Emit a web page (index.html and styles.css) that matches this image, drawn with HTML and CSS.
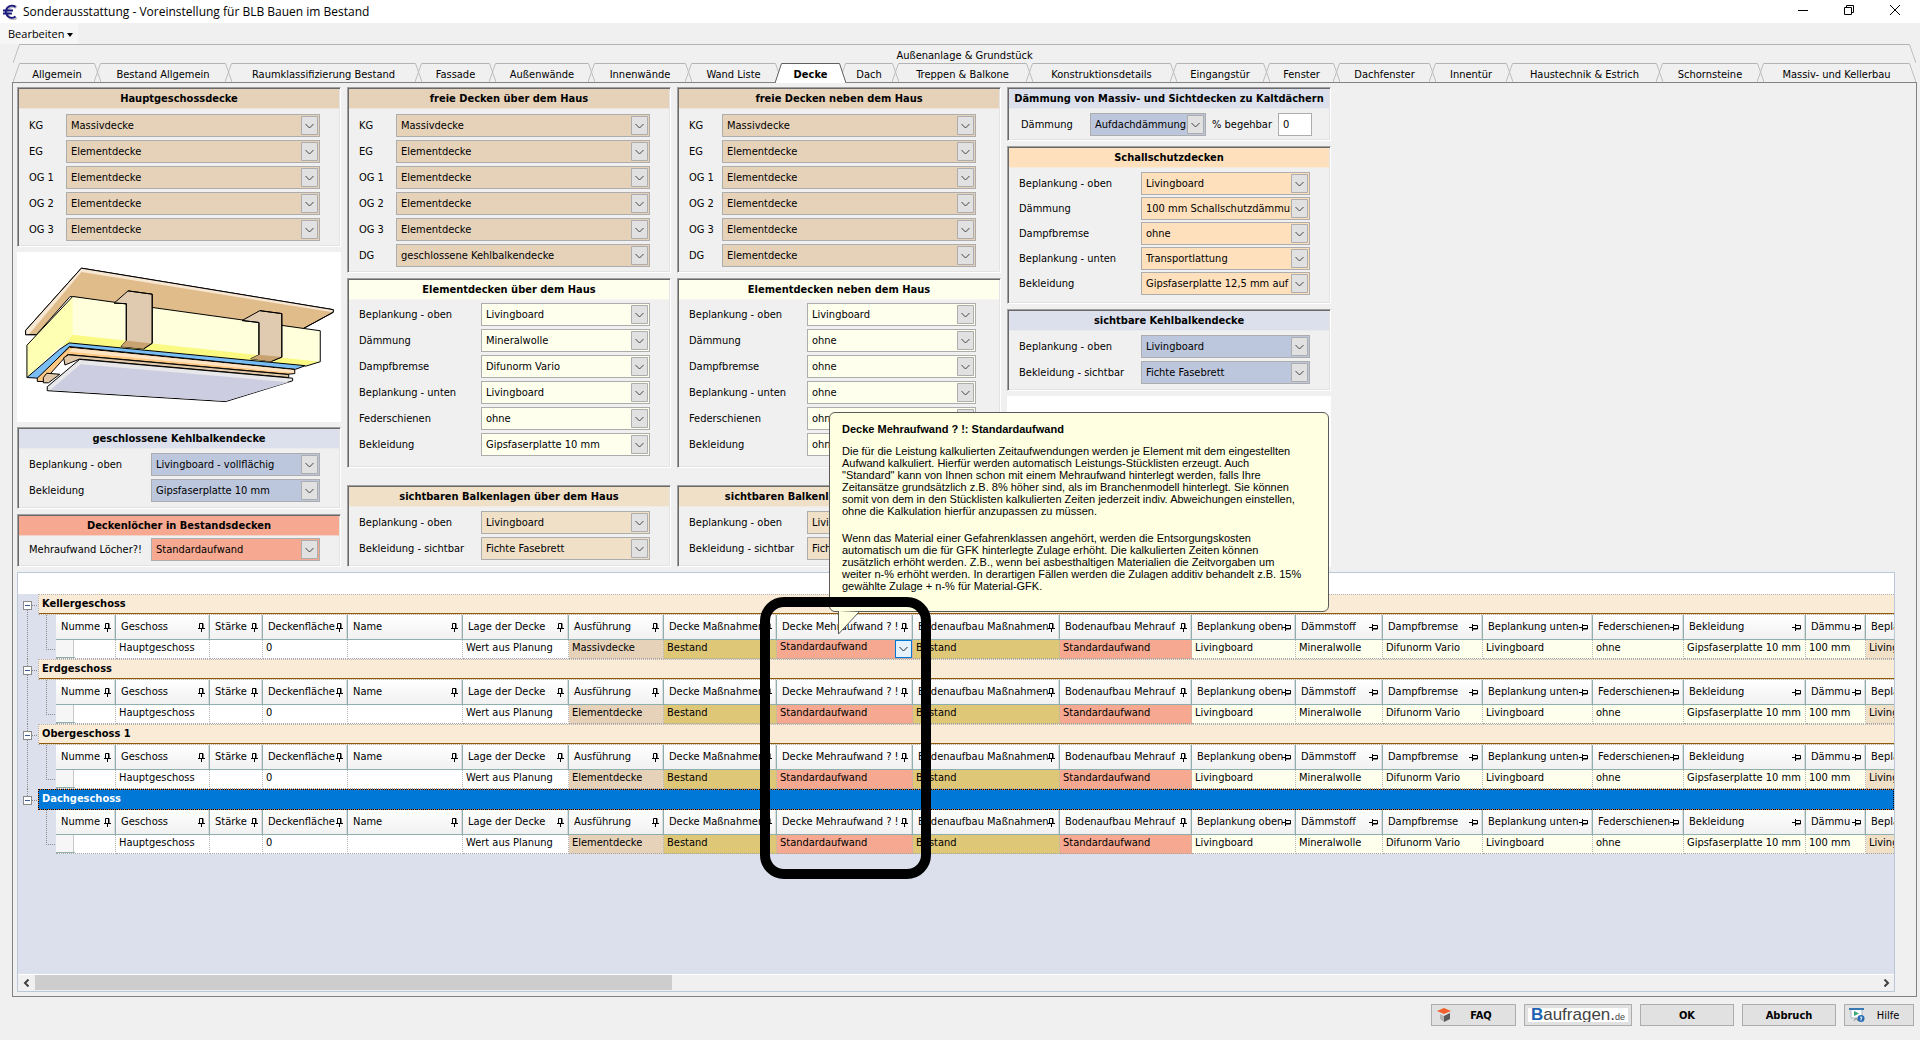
FILE: index.html
```html
<!DOCTYPE html>
<html lang="de">
<head>
<meta charset="utf-8">
<title>Sonderausstattung - Voreinstellung für BLB Bauen im Bestand</title>
<link rel="stylesheet" href="styles.css">
</head>
<body>
<header class="titlebar">
  <svg class="app-icon" viewBox="0 0 16 16" aria-hidden="true"><path d="M14.500 3.500A6 6 0 1 0 14.500 13.500" fill="none" stroke="#b9b9c4" stroke-width="3"/><path d="M13.500 3A6 6 0 1 0 13.500 12.500M1 6.500H11M1 9.500H10" fill="none" stroke="#1b1b7e" stroke-width="2"/></svg>
  <h1>Sonderausstattung - Voreinstellung für BLB Bauen im Bestand</h1>
  <button class="win" aria-label="Minimieren"><svg viewBox="0 0 12 12"><path d="M1 6.500H11"/></svg></button>
  <button class="win" aria-label="Wiederherstellen"><svg viewBox="0 0 12 12"><path d="M1.500 3.500H8.500V10.500H1.500ZM3.500 3.500V1.500H10.500V8.500H8.500"/></svg></button>
  <button class="win" aria-label="Schließen"><svg viewBox="0 0 12 12"><path d="M1 1L11 11M11 1L1 11"/></svg></button>
</header>
<nav class="menubar"><button>Bearbeiten <svg viewBox="0 0 6 4" aria-hidden="true"><path d="M0 0H6L3 4Z"/></svg></button></nav>

<div class="tabs" role="tablist">
  <div class="tab-row"><button class="tab" role="tab">Außenanlage &amp; Grundstück</button></div>
  <div class="tab-row">
    <button class="tab" role="tab" style="--w:81">Allgemein</button>
    <button class="tab" role="tab" style="--w:131">Bestand Allgemein</button>
    <button class="tab" role="tab" style="--w:190">Raumklassifizierung Bestand</button>
    <button class="tab" role="tab" style="--w:74">Fassade</button>
    <button class="tab" role="tab" style="--w:99">Außenwände</button>
    <button class="tab" role="tab" style="--w:97">Innenwände</button>
    <button class="tab" role="tab" style="--w:90">Wand Liste</button>
    <button class="tab active" role="tab" aria-selected="true" style="--w:64">Decke</button>
    <button class="tab" role="tab" style="--w:53">Dach</button>
    <button class="tab" role="tab" style="--w:134">Treppen &amp; Balkone</button>
    <button class="tab" role="tab" style="--w:144">Konstruktionsdetails</button>
    <button class="tab" role="tab" style="--w:93">Eingangstür</button>
    <button class="tab" role="tab" style="--w:70">Fenster</button>
    <button class="tab" role="tab" style="--w:96">Dachfenster</button>
    <button class="tab" role="tab" style="--w:77">Innentür</button>
    <button class="tab" role="tab" style="--w:150">Haustechnik &amp; Estrich</button>
    <button class="tab" role="tab" style="--w:101">Schornsteine</button>
    <button class="tab" role="tab" style="--w:159">Massiv- und Kellerbau</button>
  </div>
</div>

<main class="page">
<div class="columns">
  <div class="column">
    <section class="panel tan"><h2>Hauptgeschossdecke</h2><div class="rows short">
      <label for="h1">KG</label><select id="h1"><option>Massivdecke</option></select>
      <label for="h2">EG</label><select id="h2"><option>Elementdecke</option></select>
      <label for="h3">OG 1</label><select id="h3"><option>Elementdecke</option></select>
      <label for="h4">OG 2</label><select id="h4"><option>Elementdecke</option></select>
      <label for="h5">OG 3</label><select id="h5"><option>Elementdecke</option></select>
    </div></section>
    <svg class="drawing" viewBox="39 33 750 516" preserveAspectRatio="none" role="img" aria-label="Deckenaufbau">
      <path fill="#e0bc8a" d="M188 82L771 208V216L701 266L640 262L162 168L84 284H59V271Z"/>
      <path class="plain" fill="#f6e6d2" d="M188 82L771 208V216L188 94L66 284H59V271Z"/>
      <path fill="none" d="M188 82L771 208V216L701 266M59 271V284H84M59 271L188 82"/>
      <path class="plain" fill="#ffffdc" d="M168 168L741 272V366L168 284Z"/>
      <path class="plain" fill="#ffffb4" d="M168 168V284L62 414V316Z"/>
      <path class="plain" fill="#fafa82" d="M168 284L741 366L706 378L160 309L140 322Z"/>
      <path fill="none" d="M62 414V316L168 168L741 272V366L706 380"/>
      <path fill="#e0cbb0" d="M264 188L296 151L352 161V310L332 327L280 320L292 302V190Z"/>
      <path class="plain" fill="#c8a270" d="M292 302L350 311L332 327L280 320Z"/>
      <path fill="none" d="M264 188L292 190V302M296 151L352 161V310L332 327"/>
      <path fill="#e0cbb0" d="M560 241L601 211L652 220V352L628 365L580 357L599 345V247Z"/>
      <path class="plain" fill="#c8a270" d="M599 345L652 352L628 365L580 357Z"/>
      <path fill="none" d="M560 241L599 247V345M601 211L652 220V352L628 365"/>
      <path fill="#78bef5" d="M62 414L138 328L160 309L706 378L684 389L160 320L88 416Z"/>
      <path fill="#ffc882" d="M86 416L160 322L682 390V402L666 404L156 344L100 426H86Z"/>
      <path class="plain" fill="#ffe4c4" d="M168 325L680 391V400L160 336Z"/>
      <path fill="#e0c8a8" d="M147 354L158 345L668 405V414L184 358L150 376ZM100 414L108 401L138 404L112 430H100Z"/>
      <path fill="#e8e8ea" d="M109 442L184 359L677 416V424L522 487L109 454Z"/>
      <path class="plain" fill="#cdcde1" d="M186 374L668 428L522 485L116 452Z"/>
    </svg>
    <section class="panel blue"><h2>geschlossene Kehlbalkendecke</h2><div class="rows">
      <label for="k1">Beplankung - oben</label><select id="k1"><option>Livingboard - vollflächig</option></select>
      <label for="k2">Bekleidung</label><select id="k2"><option>Gipsfaserplatte 10 mm</option></select>
    </div></section>
    <section class="panel red"><h2>Deckenlöcher in Bestandsdecken</h2><div class="rows tight">
      <label for="l1">Mehraufwand Löcher?!</label><select id="l1"><option>Standardaufwand</option></select>
    </div></section>
  </div>

  <div class="column">
    <section class="panel tan"><h2>freie Decken über dem Haus</h2><div class="rows short">
      <label for="u1">KG</label><select id="u1"><option>Massivdecke</option></select>
      <label for="u2">EG</label><select id="u2"><option>Elementdecke</option></select>
      <label for="u3">OG 1</label><select id="u3"><option>Elementdecke</option></select>
      <label for="u4">OG 2</label><select id="u4"><option>Elementdecke</option></select>
      <label for="u5">OG 3</label><select id="u5"><option>Elementdecke</option></select>
      <label for="u6">DG</label><select id="u6"><option>geschlossene Kehlbalkendecke</option></select>
    </div></section>
    <section class="panel ivory"><h2>Elementdecken über dem Haus</h2><div class="rows">
      <label for="e1">Beplankung - oben</label><select id="e1"><option>Livingboard</option></select>
      <label for="e2">Dämmung</label><select id="e2"><option>Mineralwolle</option></select>
      <label for="e3">Dampfbremse</label><select id="e3"><option>Difunorm Vario</option></select>
      <label for="e4">Beplankung - unten</label><select id="e4"><option>Livingboard</option></select>
      <label for="e5">Federschienen</label><select id="e5"><option>ohne</option></select>
      <label for="e6">Bekleidung</label><select id="e6"><option>Gipsfaserplatte 10 mm</option></select>
    </div></section>
    <section class="panel beige last"><h2>sichtbaren Balkenlagen über dem Haus</h2><div class="rows">
      <label for="b1">Beplankung - oben</label><select id="b1"><option>Livingboard</option></select>
      <label for="b2">Bekleidung - sichtbar</label><select id="b2"><option>Fichte Fasebrett</option></select>
    </div></section>
  </div>

  <div class="column beside">
    <section class="panel tan"><h2>freie Decken neben dem Haus</h2><div class="rows short">
      <label for="n1">KG</label><select id="n1"><option>Massivdecke</option></select>
      <label for="n2">EG</label><select id="n2"><option>Elementdecke</option></select>
      <label for="n3">OG 1</label><select id="n3"><option>Elementdecke</option></select>
      <label for="n4">OG 2</label><select id="n4"><option>Elementdecke</option></select>
      <label for="n5">OG 3</label><select id="n5"><option>Elementdecke</option></select>
      <label for="n6">DG</label><select id="n6"><option>Elementdecke</option></select>
    </div></section>
    <section class="panel ivory"><h2>Elementdecken neben dem Haus</h2><div class="rows">
      <label for="f1">Beplankung - oben</label><select id="f1"><option>Livingboard</option></select>
      <label for="f2">Dämmung</label><select id="f2"><option>ohne</option></select>
      <label for="f3">Dampfbremse</label><select id="f3"><option>ohne</option></select>
      <label for="f4">Beplankung - unten</label><select id="f4"><option>ohne</option></select>
      <label for="f5">Federschienen</label><select id="f5"><option>ohne</option></select>
      <label for="f6">Bekleidung</label><select id="f6"><option>ohne</option></select>
    </div></section>
    <section class="panel beige last"><h2>sichtbaren Balkenlagen neben dem Haus</h2><div class="rows">
      <label for="g1">Beplankung - oben</label><select id="g1"><option>Livingboard</option></select>
      <label for="g2">Bekleidung - sichtbar</label><select id="g2"><option>Fichte Fasebrett</option></select>
    </div></section>
  </div>

  <div class="column">
    <section class="panel blue"><h2>Dämmung von Massiv- und Sichtdecken zu Kaltdächern</h2><div class="inline-row">
      <label for="d1">Dämmung</label><select id="d1"><option>Aufdachdämmung</option></select>
      <label for="d2">% begehbar</label><input id="d2" type="text" value="0">
    </div></section>
    <section class="panel orange"><h2>Schallschutzdecken</h2><div class="rows dense">
      <label for="s1">Beplankung - oben</label><select id="s1"><option>Livingboard</option></select>
      <label for="s2">Dämmung</label><select id="s2"><option>100 mm Schallschutzdämmung</option></select>
      <label for="s3">Dampfbremse</label><select id="s3"><option>ohne</option></select>
      <label for="s4">Beplankung - unten</label><select id="s4"><option>Transportlattung</option></select>
      <label for="s5">Bekleidung</label><select id="s5"><option>Gipsfaserplatte 12,5 mm auf Federschiene</option></select>
    </div></section>
    <section class="panel blue"><h2>sichtbare Kehlbalkendecke</h2><div class="rows">
      <label for="v1">Beplankung - oben</label><select id="v1"><option>Livingboard</option></select>
      <label for="v2">Bekleidung - sichtbar</label><select id="v2"><option>Fichte Fasebrett</option></select>
    </div></section>
    <div class="blank"></div>
  </div>
</div>

<div class="grid">
  <div class="grid-body">
  <section class="group first"><button class="toggle" aria-label="Zuklappen"></button><h3>Kellergeschoss</h3><i class="branch"></i>
  <table><colgroup><col class="c1"><col class="c2"><col class="c3"><col class="c4"><col class="c5"><col class="c6"><col class="c7"><col class="c8"><col class="c9"><col class="c10"><col class="c11"><col class="c12"><col class="c13"><col class="c14"><col class="c15"><col class="c16"><col class="c17"><col class="c18"><col class="c19"></colgroup>
  <thead><tr><th>Numme</th><th>Geschoss</th><th>Stärke</th><th>Deckenfläche</th><th>Name</th><th>Lage der Decke</th><th>Ausführung</th><th>Decke Maßnahmen</th><th>Decke Mehraufwand ? !</th><th>Bodenaufbau Maßnahmen</th><th>Bodenaufbau Mehrauf</th><th class="side">Beplankung oben</th><th class="side">Dämmstoff</th><th class="side">Dampfbremse</th><th class="side">Beplankung unten</th><th class="side">Federschienen</th><th class="side">Bekleidung</th><th class="side">Dämmu</th><th class="side">Beplankung oben</th></tr></thead>
  <tbody><tr><td class="handle"></td><td>Hauptgeschoss</td><td></td><td>0</td><td></td><td>Wert aus Planung</td><td class="tan">Massivdecke</td><td class="gold">Bestand</td><td class="red"><div class="editing">Standardaufwand<button class="drop" aria-label="Auswahl öffnen"></button></div></td><td class="gold">Bestand</td><td class="red">Standardaufwand</td><td class="ivory">Livingboard</td><td class="ivory">Mineralwolle</td><td class="ivory">Difunorm Vario</td><td class="ivory">Livingboard</td><td class="ivory">ohne</td><td class="ivory">Gipsfaserplatte 10 mm</td><td class="ivory">100 mm</td><td class="beige">Livingboard</td></tr></tbody></table></section>

  <section class="group"><button class="toggle" aria-label="Zuklappen"></button><h3>Erdgeschoss</h3><i class="branch"></i>
  <table><colgroup><col class="c1"><col class="c2"><col class="c3"><col class="c4"><col class="c5"><col class="c6"><col class="c7"><col class="c8"><col class="c9"><col class="c10"><col class="c11"><col class="c12"><col class="c13"><col class="c14"><col class="c15"><col class="c16"><col class="c17"><col class="c18"><col class="c19"></colgroup>
  <thead><tr><th>Numme</th><th>Geschoss</th><th>Stärke</th><th>Deckenfläche</th><th>Name</th><th>Lage der Decke</th><th>Ausführung</th><th>Decke Maßnahmen</th><th>Decke Mehraufwand ? !</th><th>Bodenaufbau Maßnahmen</th><th>Bodenaufbau Mehrauf</th><th class="side">Beplankung oben</th><th class="side">Dämmstoff</th><th class="side">Dampfbremse</th><th class="side">Beplankung unten</th><th class="side">Federschienen</th><th class="side">Bekleidung</th><th class="side">Dämmu</th><th class="side">Beplankung oben</th></tr></thead>
  <tbody><tr><td class="handle"></td><td>Hauptgeschoss</td><td></td><td>0</td><td></td><td>Wert aus Planung</td><td class="tan">Elementdecke</td><td class="gold">Bestand</td><td class="red">Standardaufwand</td><td class="gold">Bestand</td><td class="red">Standardaufwand</td><td class="ivory">Livingboard</td><td class="ivory">Mineralwolle</td><td class="ivory">Difunorm Vario</td><td class="ivory">Livingboard</td><td class="ivory">ohne</td><td class="ivory">Gipsfaserplatte 10 mm</td><td class="ivory">100 mm</td><td class="beige">Livingboard</td></tr></tbody></table></section>

  <section class="group"><button class="toggle" aria-label="Zuklappen"></button><h3>Obergeschoss 1</h3><i class="branch"></i>
  <table><colgroup><col class="c1"><col class="c2"><col class="c3"><col class="c4"><col class="c5"><col class="c6"><col class="c7"><col class="c8"><col class="c9"><col class="c10"><col class="c11"><col class="c12"><col class="c13"><col class="c14"><col class="c15"><col class="c16"><col class="c17"><col class="c18"><col class="c19"></colgroup>
  <thead><tr><th>Numme</th><th>Geschoss</th><th>Stärke</th><th>Deckenfläche</th><th>Name</th><th>Lage der Decke</th><th>Ausführung</th><th>Decke Maßnahmen</th><th>Decke Mehraufwand ? !</th><th>Bodenaufbau Maßnahmen</th><th>Bodenaufbau Mehrauf</th><th class="side">Beplankung oben</th><th class="side">Dämmstoff</th><th class="side">Dampfbremse</th><th class="side">Beplankung unten</th><th class="side">Federschienen</th><th class="side">Bekleidung</th><th class="side">Dämmu</th><th class="side">Beplankung oben</th></tr></thead>
  <tbody><tr><td class="handle"></td><td>Hauptgeschoss</td><td></td><td>0</td><td></td><td>Wert aus Planung</td><td class="tan">Elementdecke</td><td class="gold">Bestand</td><td class="red">Standardaufwand</td><td class="gold">Bestand</td><td class="red">Standardaufwand</td><td class="ivory">Livingboard</td><td class="ivory">Mineralwolle</td><td class="ivory">Difunorm Vario</td><td class="ivory">Livingboard</td><td class="ivory">ohne</td><td class="ivory">Gipsfaserplatte 10 mm</td><td class="ivory">100 mm</td><td class="beige">Livingboard</td></tr></tbody></table></section>

  <section class="group selected"><button class="toggle" aria-label="Zuklappen"></button><h3>Dachgeschoss</h3><i class="branch"></i>
  <table><colgroup><col class="c1"><col class="c2"><col class="c3"><col class="c4"><col class="c5"><col class="c6"><col class="c7"><col class="c8"><col class="c9"><col class="c10"><col class="c11"><col class="c12"><col class="c13"><col class="c14"><col class="c15"><col class="c16"><col class="c17"><col class="c18"><col class="c19"></colgroup>
  <thead><tr><th>Numme</th><th>Geschoss</th><th>Stärke</th><th>Deckenfläche</th><th>Name</th><th>Lage der Decke</th><th>Ausführung</th><th>Decke Maßnahmen</th><th>Decke Mehraufwand ? !</th><th>Bodenaufbau Maßnahmen</th><th>Bodenaufbau Mehrauf</th><th class="side">Beplankung oben</th><th class="side">Dämmstoff</th><th class="side">Dampfbremse</th><th class="side">Beplankung unten</th><th class="side">Federschienen</th><th class="side">Bekleidung</th><th class="side">Dämmu</th><th class="side">Beplankung oben</th></tr></thead>
  <tbody><tr><td class="handle"></td><td>Hauptgeschoss</td><td></td><td>0</td><td></td><td>Wert aus Planung</td><td class="tan">Elementdecke</td><td class="gold">Bestand</td><td class="red">Standardaufwand</td><td class="gold">Bestand</td><td class="red">Standardaufwand</td><td class="ivory">Livingboard</td><td class="ivory">Mineralwolle</td><td class="ivory">Difunorm Vario</td><td class="ivory">Livingboard</td><td class="ivory">ohne</td><td class="ivory">Gipsfaserplatte 10 mm</td><td class="ivory">100 mm</td><td class="beige">Livingboard</td></tr></tbody></table></section>
  </div>
  <div class="scrollbar">
    <button aria-label="Nach links"><svg viewBox="0 0 8 8"><path d="M5.500 0.500L2 4L5.500 7.500"/></svg></button>
    <div class="track"><div class="thumb"></div></div>
    <button aria-label="Nach rechts"><svg viewBox="0 0 8 8"><path d="M2.500 0.500L6 4L2.500 7.500"/></svg></button>
  </div>
</div>
</main>

<footer class="actions">
  <button class="faq"><svg viewBox="0 0 14 14" aria-hidden="true"><path fill="#f0602c" d="M0 3L7 0L14 3L7 6Z"/><path fill="#b4b4b4" d="M3 6L7 8V14L3 11Z"/><path fill="#5a5a5a" d="M7 8L13 5V11L7 14Z"/></svg><b>FAQ</b></button>
  <button class="baufragen"><span><em>B</em>aufragen.<small>de</small></span></button>
  <button class="wide">OK</button>
  <button class="wide">Abbruch</button>
  <button class="help"><svg viewBox="0 0 16 14" aria-hidden="true"><path fill="#fff" stroke="#a9b8c4" d="M2 1H13V10H2Z"/><path stroke="#3a78b4" stroke-width="2" d="M0 1H15"/><path fill="#3aa878" d="M5 3L10 5.500L5 8Z"/><path stroke="#888" fill="none" d="M5 13L7 10L9 13"/><circle cx="12" cy="10.500" r="3.500" fill="#2c6cb4"/><path stroke="#fff" fill="none" d="M11 9.500Q12 8 13 9.500L12 11V12.500"/></svg><span>Hilfe</span></button>
</footer>

<aside class="tooltip" role="tooltip">
  <h4>Decke Mehraufwand ? !: Standardaufwand</h4>
  <p>Die für die Leistung kalkulierten Zeitaufwendungen werden je Element mit dem eingestellten<br>Aufwand kalkuliert. Hierfür werden automatisch Leistungs-Stücklisten erzeugt. Auch<br>"Standard" kann von Ihnen schon mit einem Mehraufwand hinterlegt werden, falls Ihre<br>Zeitansätze grundsätzlich z.B. 8% höher sind, als im Branchenmodell hinterlegt. Sie können<br>somit von dem in den Stücklisten kalkulierten Zeiten jederzeit indiv. Abweichungen einstellen,<br>ohne die Kalkulation hierfür anzupassen zu müssen.</p>
  <p>Wenn das Material einer Gefahrenklassen angehört, werden die Entsorgungskosten<br>automatisch um die für GFK hinterlegte Zulage erhöht. Die kalkulierten Zeiten können<br>zusätzlich erhöht werden. Z.B., wenn bei asbesthaltigen Materialien die Zeitvorgaben um<br>weiter n-% erhöht werden. In derartigen Fällen werden die Zulagen additiv behandelt z.B. 15%<br>gewählte Zulage + n-% für Material-GFK.</p>
  <svg class="tail" viewBox="0 0 24 24" aria-hidden="true"><path d="M1.500 0V23L22 1" fill="#ffffe1" stroke="#5a5a5a"/></svg>
</aside>
<div class="marker"></div>
</body>
</html>
```
FILE: styles.css
```css
* { box-sizing: border-box; }

body {
  margin: 0;
  min-height: 100vh;
  display: flex;
  flex-direction: column;
  position: relative;
  background: #f0f0f0;
  color: #000;
  font: 11px/13px "DejaVu Sans Condensed", "DejaVu Sans", sans-serif;
}

h1, h2, h3, h4, p { margin: 0; font-size: 11px; }
button, select, input { font: inherit; color: inherit; margin: 0; border-radius: 0; }
button { padding: 0; border: 0; background: none; }

/* Title bar and menu */
.titlebar { display: flex; align-items: center; height: 23px; padding: 0 2px; background: #fff; }
.titlebar h1 { flex: 1; padding-left: 5px; font: 12px/16px "Open Sans", sans-serif; }
.app-icon { width: 16px; height: 16px; }
.win { width: 46px; height: 20px; }
.win svg { width: 12px; height: 12px; fill: none; stroke: #000; }
.menubar { height: 21px; }
.menubar button { height: 21px; padding: 1px 5px 0 8px; background: #f6f6f6; font: 11px/16px "Open Sans", sans-serif; }
.menubar svg { width: 6px; height: 4px; vertical-align: middle; }

/* Tabs */
.tabs { padding: 0 4px 0 13px; }
.tab-row { display: flex; height: 19px; }
.tab {
  flex: var(--w, 1) 1 7px;
  min-width: 0;
  margin-right: -7px;
  padding-top: 3px;
  white-space: nowrap;
  background:
    url("data:image/svg+xml,%3Csvg xmlns='http://www.w3.org/2000/svg' width='7' height='19'%3E%3Cpath d='M0 19L6.500 .5H7' fill='none' stroke='%23bdbdbd'/%3E%3C/svg%3E") left top no-repeat,
    url("data:image/svg+xml,%3Csvg xmlns='http://www.w3.org/2000/svg' width='7' height='19'%3E%3Cpath d='M7 19L.5 .5H0' fill='none' stroke='%23bdbdbd'/%3E%3C/svg%3E") right top no-repeat,
    linear-gradient(#b4b4b4, #b4b4b4) 7px 0 / calc(100% - 14px) 1px no-repeat;
}
.tab:last-child { flex-basis: 0; margin-right: 0; }
.tab.active {
  z-index: 1;
  height: 20px;
  font-weight: bold;
  background:
    url("data:image/svg+xml,%3Csvg xmlns='http://www.w3.org/2000/svg' width='7' height='20'%3E%3Cpath d='M0 20L6.500 .5H7V20Z' fill='%23fff'/%3E%3Cpath d='M0 20L6.500 .5H7' fill='none' stroke='%23606060'/%3E%3C/svg%3E") left top no-repeat,
    url("data:image/svg+xml,%3Csvg xmlns='http://www.w3.org/2000/svg' width='7' height='20'%3E%3Cpath d='M7 20L.5 .5H0V20Z' fill='%23fff'/%3E%3Cpath d='M7 20L.5 .5H0' fill='none' stroke='%23606060'/%3E%3C/svg%3E") right top no-repeat,
    linear-gradient(#606060 1px, #fff 1px) 7px 0 / calc(100% - 14px) 100% no-repeat;
}

.page {
  flex: 1;
  display: flex;
  flex-direction: column;
  gap: 5px;
  margin: 0 3px 0 12px;
  padding: 4px 21px 4px 4px;
  border: 1px solid #828282;
}

/* Settings panels */
.tan { --head: #e6d2b9; --field: #e6d2b9; }
.blue { --head: #dbe0ec; --field: #bcc7dd; }
.red { --head: #f6a990; --field: #f6a990; }
.ivory { --head: #ffffee; --field: #ffffee; }
.beige { --head: #f0e0c8; --field: #f0e0c8; }
.orange { --head: #ffe0bc; --field: #ffe0bc; }
.gold { --field: #dfc778; }

.columns { display: grid; grid-template-columns: repeat(4, minmax(0, 324px)); gap: 6px; }
.column { --short: 37px; --long: 122px; --end: 19px; display: flex; flex-direction: column; gap: 5px; }
.column.beside { --short: 33px; --long: 118px; --end: 23px; }

.panel {
  border: 1px solid;
  border-color: #a0a0a0 #fff #fff #a0a0a0;
  box-shadow: inset 1px 1px #696969, inset -1px -1px #e3e3e3;
  padding: 1px;
}
.panel h2 { height: 20px; line-height: 20px; text-align: center; white-space: nowrap; background: var(--head); border-bottom: 1px solid #f0f0f099; }
.panel.last { margin-top: auto; }
.rows {
  display: grid;
  grid-template-columns: var(--long) minmax(0, 1fr);
  grid-auto-rows: 23px;
  row-gap: 3px;
  align-items: center;
  padding: 4px var(--end) 5px 10px;
}
.rows.short { grid-template-columns: var(--short) minmax(0, 1fr); padding-top: 5px; padding-bottom: 4px; }
.rows.dense { row-gap: 2px; padding-bottom: 7px; }
.rows.tight { padding: 2px var(--end) 4px 10px; }
.ivory .rows { padding: 3px var(--end) 10px 10px; }
.inline-row { display: flex; align-items: center; gap: 6px; padding: 4px 17px 3px 12px; }
.inline-row label:first-child { flex: 1; }
.inline-row select { width: 116px; }
.inline-row input { width: 34px; }
label { white-space: nowrap; }

select, input {
  width: 100%;
  height: 23px;
  padding: 0 18px 0 4px;
  border: 1px solid #adadad;
  appearance: none;
  background-color: var(--field);
}
select {
  background-image: url("data:image/svg+xml,%3Csvg xmlns='http://www.w3.org/2000/svg' width='17' height='19'%3E%3Cpath d='M.5 .5H16.500V18.500H.5Z' fill='%23e1e1e1' stroke='%23adadad'/%3E%3Cpath d='M4.500 8L8.500 12L12.500 8' fill='none' stroke='%23444'/%3E%3C/svg%3E");
  background-repeat: no-repeat;
  background-position: right 1px center;
}
input { padding: 0 4px; background-color: #fff; }

.drawing { width: 100%; height: 170px; background: #fff; }
.drawing path { stroke: #000; vector-effect: non-scaling-stroke; }
.drawing .plain { stroke: none; }
.blank { flex: 1; background: #fff; }

/* Storey grid */
.grid { flex: 1; display: flex; flex-direction: column; border: 1px solid #b8c8d8; background: #dbe0ec; }
.grid-body { flex: 1; min-width: 0; overflow: hidden; border-top: 21px solid #fff; }
.group {
  display: grid;
  grid-template-columns: 20px 18px minmax(0, 1fr);
  grid-template-rows: 21px 44px;
  overflow: hidden;
  background: repeating-linear-gradient(#8a8a8a 0 1px, transparent 1px 2px) 9px 0 / 1px 100% no-repeat;
}
.group.first { background-position: 9px 12px; }
.group.selected { background-size: 1px 10px; }
.toggle {
  justify-self: end;
  align-self: center;
  width: 15px;
  height: 9px;
  margin-top: 2px;
  background:
    linear-gradient(#3a5a9a, #3a5a9a) 2px 4px / 5px 1px no-repeat,
    linear-gradient(#fff, #fff) 1px 1px / 7px 7px no-repeat,
    linear-gradient(#8a8a8a, #8a8a8a) 0 0 / 9px 9px no-repeat,
    repeating-linear-gradient(90deg, #8a8a8a 0 1px, transparent 1px 2px) 9px 4px / 6px 1px no-repeat;
}
.group h3 {
  grid-column: 2 / 4;
  padding-left: 3px;
  line-height: 17px;
  background: #faebd7;
  border-top: 1px dotted #b4b4b4;
  border-bottom: 1px dotted #b4b4b4;
  border-left: 1px dotted #b4b4b4;
  box-shadow: inset 0 -1px #8f5a0a;
}
.group.selected h3 { background: #0078d7; color: #fff; border: 1px dashed #ff8728; border-right: 0; outline: 1px dotted #000; outline-offset: -1px; box-shadow: none; }
.branch {
  grid-column: 2;
  background:
    repeating-linear-gradient(#8a8a8a 0 1px, transparent 1px 2px) 8px 0 / 1px 35px no-repeat,
    repeating-linear-gradient(90deg, #8a8a8a 0 1px, transparent 1px 2px) 8px 34px / 10px 1px no-repeat;
}
table { width: 1930px; table-layout: fixed; border-spacing: 0; background: #fff; }
.c1, .c18 { width: 60px; }
.c2 { width: 94px; }
.c3 { width: 53px; }
.c4 { width: 85px; }
.c5 { width: 115px; }
.c6 { width: 106px; }
.c7 { width: 95px; }
.c8 { width: 113px; }
.c9 { width: 136px; }
.c10 { width: 147px; }
.c11 { width: 132px; }
.c12 { width: 104px; }
.c13 { width: 87px; }
.c14 { width: 100px; }
.c15 { width: 110px; }
.c16 { width: 91px; }
.c17 { width: 122px; }
.c19 { width: 120px; }
th, td { overflow: hidden; white-space: nowrap; text-align: left; font-weight: normal; }
th {
  height: 25px;
  padding: 0 11px 1px 5px;
  border-right: 1px solid #8fafaf;
  border-bottom: 1px solid #8fafaf;
  background:
    url("data:image/svg+xml,%3Csvg xmlns='http://www.w3.org/2000/svg' width='7' height='9'%3E%3Cpath d='M1.500 5V.5H5V5M4.500 0V5M0 5.500H7M3.500 6V9' fill='none' stroke='%23000'/%3E%3C/svg%3E") right 4px center no-repeat,
    linear-gradient(90deg, #dcdcdc, #dcdcdc) right 0 top 0 / 1px 100% no-repeat,
    linear-gradient(#fff, #f1f1f1);
}
th.side {
  background-image:
    url("data:image/svg+xml,%3Csvg xmlns='http://www.w3.org/2000/svg' width='9' height='7'%3E%3Cpath d='M4 1.500H8.500V5H4M4 4.500H9M3.500 0V7M0 3.500H3' fill='none' stroke='%23000'/%3E%3C/svg%3E"),
    linear-gradient(90deg, #dcdcdc, #dcdcdc),
    linear-gradient(#fff, #f1f1f1);
}
td {
  height: 19px;
  padding: 0 0 4px 3px;
  border-right: 1px dotted #b4b4b4;
  border-bottom: 1px dotted #a4a4a4;
  background: var(--field, #fff);
}
td.handle { background: linear-gradient(#8fafaf, #8fafaf) 0 17px / 19px 1px no-repeat, linear-gradient(90deg, #f6f6f6 17px, #c8c8c8 17px 18px, #fff 18px); }
.editing { display: flex; justify-content: space-between; height: 14px; }
.drop {
  width: 17px;
  height: 18px;
  border: 1px solid #0078d7;
  background: #e5f1fb url("data:image/svg+xml,%3Csvg xmlns='http://www.w3.org/2000/svg' width='9' height='6'%3E%3Cpath d='M.5 1L4.500 5L8.500 1' fill='none' stroke='%23222'/%3E%3C/svg%3E") center no-repeat;
}

.scrollbar { display: flex; height: 17px; border-top: 1px solid #fff; background: #f0f0f0; }
.scrollbar button { width: 17px; }
.scrollbar svg { width: 8px; height: 8px; fill: none; stroke: #404040; stroke-width: 2; }
.track { flex: 1; }
.thumb { width: 34.6%; height: 15px; background: #cdcdcd; }

/* Footer buttons */
.actions { display: flex; justify-content: flex-end; gap: 8px; padding: 7px 6px 14px; }
.actions button { display: flex; align-items: center; justify-content: center; height: 22px; border: 1px solid #adadad; background: #e1e1e1; font-weight: bold; }
.actions svg { height: 14px; }
.actions .faq { width: 85px; gap: 19px; padding-right: 18px; }
.actions .baufragen { width: 108px; }
.baufragen span { width: 100px; height: 14px; overflow: hidden; background: #fff; color: #444; font: 17px/14px "Liberation Sans", sans-serif; }
.baufragen em { color: #1e64b4; font-weight: bold; font-style: normal; }
.baufragen small { font-size: 9px; }
.actions .wide { width: 94px; }
.actions .help { width: 70px; gap: 12px; padding-right: 10px; font-weight: normal; }

/* Hint balloon and highlight frame float over the page */
.tooltip {
  position: absolute;
  left: 829px;
  top: 412px;
  width: 500px;
  height: 200px;
  padding: 10px 12px;
  border: 1px solid #5a5a5a;
  border-radius: 6px;
  background: #ffffe1;
  font: 11px/12px "Liberation Sans", sans-serif;
  white-space: nowrap;
}
.tooltip h4 { margin-bottom: 10px; }
.tooltip p { margin-bottom: 15px; }
.tail { position: absolute; left: 7px; top: 198px; width: 24px; height: 24px; }
.marker { position: absolute; left: 760px; top: 597px; width: 171px; height: 282px; border: 10px solid #000; border-radius: 24px; pointer-events: none; }
```
